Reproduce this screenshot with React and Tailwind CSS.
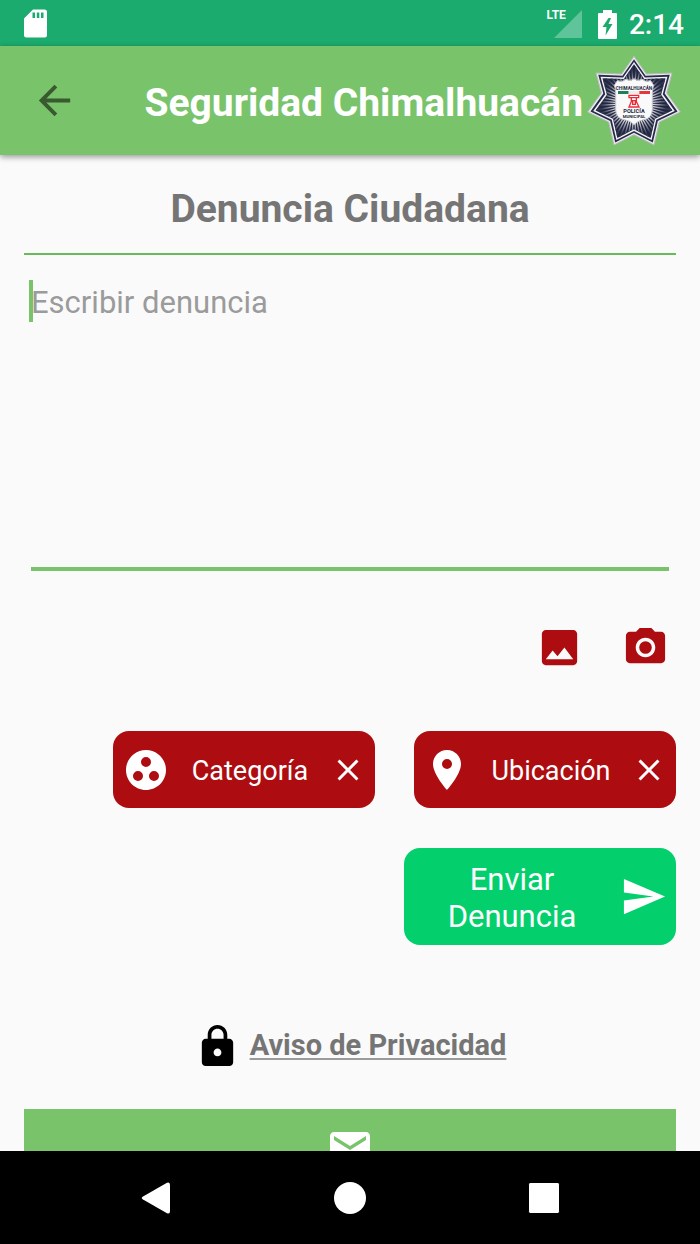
import React, { useState } from "react";
import {
  MdArrowBack,
  MdCameraAlt,
  MdClose,
  MdEmail,
  MdGroupWork,
  MdImage,
  MdLocationOn,
  MdLock,
  MdSend,
} from "react-icons/md";

const STAR =
  "162,33 199,86 276,83 260,143 301,200 238,230 222,299 162,268 102,299 86,230 23,200 64,143 48,83 125,86";

function StatusBar() {
  return (
    <div className="flex h-[46px] shrink-0 items-center justify-between bg-[#1bab6e] pl-6 pr-4 text-white">
      {/* SD card */}
      <svg className="h-[29px] w-[23px]" viewBox="0 0 23 29" fill="currentColor">
        <path
          fillRule="evenodd"
          d="M9 0.500H20.500Q23 0.500 23 3V26Q23 28.500 20.500 28.500H2.500Q0 28.500 0 26V9.500ZM8.500 3.500V9H11V3.500ZM12.800 3.500V9H15.300V3.500ZM17 3.500V9H19.500V3.500Z"
        />
      </svg>
      <div className="flex items-center pt-0.5">
        <span className="self-start text-[12px] leading-4 font-bold">LTE</span>
        <svg className="-ml-3 h-7 w-7" viewBox="0 0 28 28">
          <path d="M28 0V28H0Z" fill="#fff" fillOpacity="0.3" />
        </svg>
        <svg className="ml-4 h-[29px] w-[19px]" viewBox="0 0 19 29" fill="currentColor">
          <path
            fillRule="evenodd"
            d="M5 0H14V3H18Q19 3 19 4V28Q19 29 18 29H1Q0 29 0 28V4Q0 3 1 3H5ZM10.500 8L4.500 17H8.500L7.500 25.500L14.500 14H10.500L13 8Z"
          />
        </svg>
        <span className="ml-3 pt-0.5 text-[28px] leading-8 font-medium">2:14</span>
      </div>
    </div>
  );
}

function PoliceBadge() {
  const rays = Array.from({ length: 56 }, (_, i) => ((i + 0.5) * Math.PI * 2) / 56);

  return (
    <svg className="h-[92px] w-[94px] shrink-0" viewBox="21 29 282 276" role="img" aria-label="Policía Municipal">
      <defs>
        <clipPath id="star">
          <polygon points={STAR} transform="translate(162 174) scale(0.83) translate(-162 -174)" />
        </clipPath>
        <radialGradient id="rays" gradientUnits="userSpaceOnUse" cx="162" cy="174" r="115">
          <stop offset="0.5" stopColor="#dcdde4" />
          <stop offset="0.85" stopColor="#34395a" />
        </radialGradient>
      </defs>
      <polygon points={STAR} fill="#eceaec" stroke="#b9b9b9" strokeWidth="3" />
      <polygon
        points={STAR}
        fill="#262b4c"
        transform="translate(162 174) scale(0.94) translate(-162 -174)"
      />
      <polygon
        points={STAR}
        fill="#f3f3f6"
        transform="translate(162 174) scale(0.88) translate(-162 -174)"
      />
      <g clipPath="url(#star)">
        <rect x="20" y="30" width="290" height="280" fill="#23283f" />
        {rays.map((a) => (
          <line
            key={a}
            x1="162"
            y1="174"
            x2={162 + 150 * Math.cos(a)}
            y2={174 + 150 * Math.sin(a)}
            stroke="url(#rays)"
            strokeWidth="4"
          />
        ))}
      </g>
      <path
        d="M112 106Q128 112 138 102Q151 110 162 100Q173 110 186 102Q196 112 212 106L221 120Q217 130 217 142V192Q217 220 188 224Q171 227 162 238Q153 227 136 224Q107 220 107 192V142Q107 130 103 120Z"
        fill="#fafafa"
        stroke="#c3c4cc"
        strokeWidth="3"
      />
      <path d="M114 137H146V146H114Z" fill="#1c8058" />
      <path d="M146 137H178V146H146Z" fill="#ececec" />
      <path d="M178 137H210V146H178Z" fill="#e5373c" />
      <g fill="none" stroke="#ed2a34" strokeWidth="4">
        <path d="M147 150H176V157H147ZM154 157V166H169V157M155 166L147 185H177L168 166M158 168V177H166V168" />
      </g>
      <g fill="#25273b" fontWeight="700" textAnchor="middle">
        <text x="162" y="133" fontSize="14">
          CHIMALHUACÁN
        </text>
        <text x="162" y="202" fontSize="17">
          POLICÍA
        </text>
        <text x="162" y="219" fontSize="13">
          MUNICIPAL
        </text>
      </g>
    </svg>
  );
}

function Header() {
  return (
    <header className="z-10 flex h-[109px] shrink-0 items-center bg-[#79c46b] pl-[31px] pr-[19px] shadow-[0_2px_6px_rgba(0,0,0,0.4)]">
      <button type="button" aria-label="Regresar" className="text-[#39592f]">
        <MdArrowBack size={47} />
      </button>
      <h1 className="ml-auto mr-1 whitespace-nowrap pt-1 text-[39px] leading-12 font-bold text-white">
        Seguridad Chimalhuacán
      </h1>
      <PoliceBadge />
    </header>
  );
}

function Chip({ icon: Icon, label }) {
  return (
    <button
      type="button"
      className="flex h-[77px] w-[262px] items-center rounded-2xl bg-[#ad0d11] px-[9px] text-[27px] text-white"
    >
      <Icon size={48} className="shrink-0" />
      <span className="flex-1 pt-1 text-center">{label}</span>
      <MdClose size={36} className="shrink-0" />
    </button>
  );
}

function ComplaintForm() {
  const [text, setText] = useState("");

  return (
    <form className="flex flex-col" onSubmit={(e) => e.preventDefault()}>
      {/* Complaint text */}
      <div className="relative mx-[7px] mt-[25px] border-b-4 border-[#79c46b]">
        <textarea
          aria-label="Escribir denuncia"
          placeholder="Escribir denuncia"
          value={text}
          onChange={(e) => setText(e.target.value)}
          className="block h-[287px] w-full resize-none bg-transparent pt-1 text-[31px] leading-[37px] text-[#757575] outline-none placeholder:text-[#9b9b9b]"
        />
        {!text && <span className="absolute -left-0.5 top-0 h-[42px] w-[4px] bg-[#79c46b]" />}
      </div>

      {/* Attachments */}
      <div className="mt-[53px] flex justify-end gap-[39px] pr-[7px] text-[#ad0d11]">
        <button type="button" aria-label="Galería">
          <MdImage size={47} />
        </button>
        <button type="button" aria-label="Cámara">
          <MdCameraAlt size={47} />
        </button>
      </div>

      <div className="mt-[60px] flex justify-end gap-[39px]">
        <Chip icon={MdGroupWork} label="Categoría" />
        <Chip icon={MdLocationOn} label="Ubicación" />
      </div>

      <button
        type="submit"
        className="mt-10 flex h-[97px] w-[272px] items-center self-end rounded-2xl bg-[#03d06c] pr-[9px] text-[31px] leading-[37px] text-white"
      >
        <span className="flex-1 pt-0.5">
          Enviar
          <br />
          Denuncia
        </span>
        <MdSend size={47} className="shrink-0" />
      </button>
    </form>
  );
}

function NavBar() {
  return (
    <nav className="flex h-[93px] shrink-0 items-center justify-center gap-[162px] bg-black text-white">
      <button type="button" aria-label="Atrás">
        <svg className="h-8 w-8" viewBox="0 0 32 32" fill="currentColor">
          <path d="M27 0.800Q30 -0.500 30 3V29Q30 32.500 27 31.200L3 17.500Q0.500 16 3 14.500Z" />
        </svg>
      </button>
      <button type="button" aria-label="Inicio">
        <span className="block h-8 w-8 rounded-full bg-white" />
      </button>
      <button type="button" aria-label="Recientes">
        <span className="block h-[30px] w-8 rounded-xs border-x border-black bg-white" />
      </button>
    </nav>
  );
}

function App() {
  return (
    <div className="flex h-screen flex-col overflow-hidden bg-[#fafafa] font-[Roboto,sans-serif]">
      <StatusBar />
      <Header />
      <main className="min-h-0 flex-1 overflow-hidden px-6">
        <h2 className="border-b-2 border-[#69bb5a] pt-[30px] pb-5 text-center text-[39px] leading-12 font-bold text-[#757575]">
          Denuncia Ciudadana
        </h2>

        <ComplaintForm />

        <div className="mt-[78px] flex items-center justify-center gap-[9px]">
          <MdLock size={47} />
          <a
            href="#privacidad"
            className="pb-1 text-[29px] leading-9 font-bold text-[#757575] underline decoration-[#9b9b9b] decoration-2 underline-offset-3"
          >
            Aviso de Privacidad
          </a>
        </div>

        <button
          type="button"
          aria-label="Contacto"
          className="mt-[39px] flex h-[78px] w-full items-center justify-center bg-[#79c46b] text-white"
        >
          <MdEmail size={48} />
        </button>
      </main>
      <NavBar />
    </div>
  );
}

export default App;
